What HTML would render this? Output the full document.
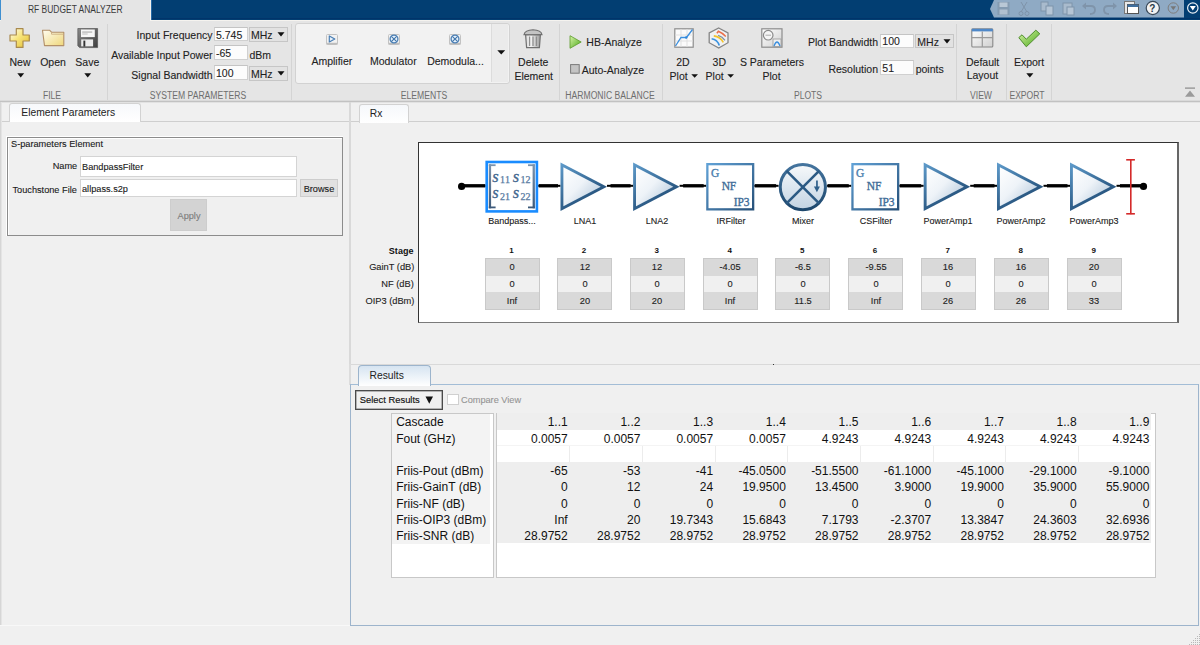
<!DOCTYPE html>
<html><head><meta charset="utf-8"><style>
html,body{margin:0;padding:0;width:1200px;height:645px;overflow:hidden;background:#f0f0f0;position:relative}
.a{position:absolute}
.t{font-family:"Liberation Sans",sans-serif;white-space:nowrap;z-index:5}
</style></head><body>
<div class="a" style="left:0px;top:0px;width:1200px;height:20px;background:#023e72"></div>
<div class="a" style="left:0px;top:18.2px;width:1200px;height:1.1999999999999993px;background:#01346a"></div>
<div class="a" style="left:0px;top:20px;width:1200px;height:1px;background:#f5f3ef"></div>
<div class="a" style="left:0px;top:0px;width:1px;height:20px;background:#3f8fd0"></div>
<div class="a" style="left:150px;top:0px;width:1px;height:20px;background:#f5f3ef"></div>
<div class="a" style="left:151px;top:0px;width:1px;height:20px;background:#3d86c6;opacity:0.6"></div>
<div class="a" style="left:1px;top:0px;width:149px;height:21px;background:#e5e5e5"></div>
<div class="a t" style="left:28px;top:4.84px;font-size:10px;line-height:10px;color:#3a3a3a;font-weight:normal;transform:scaleX(0.845);transform-origin:left top;">RF BUDGET ANALYZER</div>
<svg class="a" style="left:988px;top:0px;" width="197" height="18" viewBox="0 0 197 18"><polygon points="2,9 6,0 196,0 196,17.5 6,17.5" fill="#8faac4"/></svg>
<div class="a" style="left:0px;top:21px;width:1200px;height:80px;background:#e5e5e5"></div>
<div class="a" style="left:0px;top:102px;width:1200px;height:543px;background:#f0f0f0"></div>
<div class="a" style="left:0px;top:100px;width:1200px;height:1px;background:#dadada"></div>
<div class="a" style="left:0px;top:101px;width:1200px;height:1px;background:#c2c2c2"></div>
<div class="a" style="left:0px;top:102px;width:1200px;height:1px;background:#e2e2e2"></div>
<div class="a" style="left:107px;top:24px;width:1px;height:76px;background:#d4d4d4"></div>
<div class="a" style="left:291px;top:24px;width:1px;height:76px;background:#d4d4d4"></div>
<div class="a" style="left:559px;top:24px;width:1px;height:76px;background:#d4d4d4"></div>
<div class="a" style="left:662px;top:24px;width:1px;height:76px;background:#d4d4d4"></div>
<div class="a" style="left:956px;top:24px;width:1px;height:76px;background:#d4d4d4"></div>
<div class="a" style="left:1006px;top:24px;width:1px;height:76px;background:#d4d4d4"></div>
<div class="a" style="left:1051px;top:24px;width:1px;height:76px;background:#d4d4d4"></div>
<div class="a t" style="left:0.0px;width:40px;top:57.01px;font-size:10.5px;line-height:10.5px;color:#222;font-weight:normal;text-align:center;-webkit-text-stroke:0.1px #222;">New</div>
<div class="a t" style="left:33.0px;width:40px;top:57.01px;font-size:10.5px;line-height:10.5px;color:#222;font-weight:normal;text-align:center;-webkit-text-stroke:0.1px #222;">Open</div>
<div class="a t" style="left:67.3px;width:40px;top:57.01px;font-size:10.5px;line-height:10.5px;color:#222;font-weight:normal;text-align:center;-webkit-text-stroke:0.1px #222;">Save</div>
<div class="a t" style="left:21.5px;width:60px;top:90.53px;font-size:10px;line-height:10px;color:#6e6e6e;font-weight:normal;text-align:center;transform:scaleX(0.86);transform-origin:center top;">FILE</div>
<div class="a t" style="right:987.5px;top:30.31px;font-size:10.5px;line-height:10.5px;color:#222;font-weight:normal;text-align:right;-webkit-text-stroke:0.1px #222;">Input Frequency</div>
<div class="a t" style="right:987.5px;top:50.01px;font-size:10.5px;line-height:10.5px;color:#222;font-weight:normal;text-align:right;-webkit-text-stroke:0.1px #222;">Available Input Power</div>
<div class="a t" style="right:987.5px;top:69.51px;font-size:10.5px;line-height:10.5px;color:#222;font-weight:normal;text-align:right;-webkit-text-stroke:0.1px #222;">Signal Bandwidth</div>
<div class="a t" style="left:123.0px;width:150px;top:90.53px;font-size:10px;line-height:10px;color:#6e6e6e;font-weight:normal;text-align:center;transform:scaleX(0.86);transform-origin:center top;">SYSTEM PARAMETERS</div>
<div class="a t" style="left:301.8px;width:60px;top:56.41px;font-size:10.5px;line-height:10.5px;color:#222;font-weight:normal;text-align:center;-webkit-text-stroke:0.1px #222;">Amplifier</div>
<div class="a t" style="left:363.3px;width:60px;top:56.41px;font-size:10.5px;line-height:10.5px;color:#222;font-weight:normal;text-align:center;-webkit-text-stroke:0.1px #222;">Modulator</div>
<div class="a t" style="left:420.5px;width:70px;top:56.41px;font-size:10.5px;line-height:10.5px;color:#222;font-weight:normal;text-align:center;-webkit-text-stroke:0.1px #222;">Demodula...</div>
<div class="a t" style="left:503.29999999999995px;width:60px;top:56.61px;font-size:10.5px;line-height:10.5px;color:#222;font-weight:normal;text-align:center;-webkit-text-stroke:0.1px #222;">Delete</div>
<div class="a t" style="left:503.70000000000005px;width:60px;top:71.31px;font-size:10.5px;line-height:10.5px;color:#222;font-weight:normal;text-align:center;-webkit-text-stroke:0.1px #222;">Element</div>
<div class="a t" style="left:384.0px;width:80px;top:90.53px;font-size:10px;line-height:10px;color:#6e6e6e;font-weight:normal;text-align:center;transform:scaleX(0.86);transform-origin:center top;">ELEMENTS</div>
<div class="a t" style="left:586.3px;top:37.41px;font-size:10.5px;line-height:10.5px;color:#222;font-weight:normal;-webkit-text-stroke:0.1px #222;">HB-Analyze</div>
<div class="a t" style="left:581.7px;top:64.61px;font-size:10.5px;line-height:10.5px;color:#222;font-weight:normal;-webkit-text-stroke:0.1px #222;">Auto-Analyze</div>
<div class="a t" style="left:549.7px;width:120px;top:90.53px;font-size:10px;line-height:10px;color:#6e6e6e;font-weight:normal;text-align:center;transform:scaleX(0.86);transform-origin:center top;">HARMONIC BALANCE</div>
<div class="a t" style="left:668.0px;width:30px;top:56.61px;font-size:10.5px;line-height:10.5px;color:#222;font-weight:normal;text-align:center;-webkit-text-stroke:0.1px #222;">2D</div>
<div class="a t" style="left:663.6px;width:30px;top:70.61px;font-size:10.5px;line-height:10.5px;color:#222;font-weight:normal;text-align:center;-webkit-text-stroke:0.1px #222;">Plot</div>
<div class="a t" style="left:704.3px;width:30px;top:56.61px;font-size:10.5px;line-height:10.5px;color:#222;font-weight:normal;text-align:center;-webkit-text-stroke:0.1px #222;">3D</div>
<div class="a t" style="left:699.6px;width:30px;top:70.61px;font-size:10.5px;line-height:10.5px;color:#222;font-weight:normal;text-align:center;-webkit-text-stroke:0.1px #222;">Plot</div>
<div class="a t" style="left:732.0px;width:80px;top:56.61px;font-size:10.5px;line-height:10.5px;color:#222;font-weight:normal;text-align:center;-webkit-text-stroke:0.1px #222;">S Parameters</div>
<div class="a t" style="left:756.5px;width:30px;top:70.61px;font-size:10.5px;line-height:10.5px;color:#222;font-weight:normal;text-align:center;-webkit-text-stroke:0.1px #222;">Plot</div>
<div class="a t" style="right:322px;top:37.31px;font-size:10.5px;line-height:10.5px;color:#222;font-weight:normal;text-align:right;-webkit-text-stroke:0.1px #222;">Plot Bandwidth</div>
<div class="a t" style="right:322px;top:64.01px;font-size:10.5px;line-height:10.5px;color:#222;font-weight:normal;text-align:right;-webkit-text-stroke:0.1px #222;">Resolution</div>
<div class="a t" style="left:915.7px;top:64.01px;font-size:10.5px;line-height:10.5px;color:#222;font-weight:normal;-webkit-text-stroke:0.1px #222;">points</div>
<div class="a t" style="left:778.3px;width:60px;top:90.53px;font-size:10px;line-height:10px;color:#6e6e6e;font-weight:normal;text-align:center;transform:scaleX(0.86);transform-origin:center top;">PLOTS</div>
<div class="a t" style="left:957.6px;width:50px;top:56.61px;font-size:10.5px;line-height:10.5px;color:#222;font-weight:normal;text-align:center;-webkit-text-stroke:0.1px #222;">Default</div>
<div class="a t" style="left:957.4px;width:50px;top:70.41px;font-size:10.5px;line-height:10.5px;color:#222;font-weight:normal;text-align:center;-webkit-text-stroke:0.1px #222;">Layout</div>
<div class="a t" style="left:955.5px;width:50px;top:90.53px;font-size:10px;line-height:10px;color:#6e6e6e;font-weight:normal;text-align:center;transform:scaleX(0.86);transform-origin:center top;">VIEW</div>
<div class="a t" style="left:1004.0999999999999px;width:50px;top:56.61px;font-size:10.5px;line-height:10.5px;color:#222;font-weight:normal;text-align:center;-webkit-text-stroke:0.1px #222;">Export</div>
<div class="a t" style="left:1002.3px;width:50px;top:90.53px;font-size:10px;line-height:10px;color:#6e6e6e;font-weight:normal;text-align:center;transform:scaleX(0.86);transform-origin:center top;">EXPORT</div>
<div class="a" style="left:0px;top:102px;width:1px;height:523px;background:#d6d6d6"></div>
<div class="a" style="left:1px;top:102px;width:1px;height:523px;background:#e4e4e4"></div>
<div class="a" style="left:0px;top:625px;width:350px;height:1px;background:#f8f8f8"></div>
<div class="a" style="left:2px;top:121px;width:347px;height:1px;background:#cfcfcf"></div>
<div class="a" style="left:9px;top:103px;width:130px;height:18px;border:1px solid #d2d2d2;border-bottom:none;border-radius:3px 3px 0 0;background:linear-gradient(#f6f8fb,#ffffff)"></div>
<div class="a t" style="left:21.3px;top:108.28px;font-size:10.3px;line-height:10.3px;color:#222;font-weight:normal;">Element Parameters</div>
<div class="a" style="left:6px;top:135.5px;width:335px;height:98px;border:1px solid #ffffff;"></div>
<div class="a" style="left:7px;top:136.5px;width:334px;height:97px;border:1px solid #8c8c8c;box-shadow:inset 1px 1px 0 #fff"></div>
<div class="a t" style="left:11px;top:138.97px;font-size:9.84px;line-height:9.84px;color:#1a1a1a;font-weight:normal;transform:scaleX(0.935);transform-origin:left top;-webkit-text-stroke:0.12px #1a1a1a;">S-parameters Element</div>
<div class="a t" style="right:1123px;top:161.17px;font-size:9.84px;line-height:9.84px;color:#1a1a1a;font-weight:normal;text-align:right;transform:scaleX(0.935);transform-origin:right top;-webkit-text-stroke:0.12px #1a1a1a;">Name</div>
<div class="a" style="left:80px;top:155.5px;width:216.5px;height:21.0px;background:#fff;border:1px solid #d4d4d4;box-sizing:border-box"></div>
<div class="a t" style="left:82px;top:161.57px;font-size:9.84px;line-height:9.84px;color:#1a1a1a;font-weight:normal;transform:scaleX(0.935);transform-origin:left top;-webkit-text-stroke:0.12px #1a1a1a;">BandpassFilter</div>
<div class="a t" style="right:1123px;top:184.97px;font-size:9.84px;line-height:9.84px;color:#1a1a1a;font-weight:normal;text-align:right;transform:scaleX(0.935);transform-origin:right top;-webkit-text-stroke:0.12px #1a1a1a;">Touchstone File</div>
<div class="a" style="left:80px;top:179.3px;width:216.5px;height:18.0px;background:#fff;border:1px solid #d4d4d4;box-sizing:border-box"></div>
<div class="a t" style="left:82px;top:183.97px;font-size:9.84px;line-height:9.84px;color:#1a1a1a;font-weight:normal;transform:scaleX(0.935);transform-origin:left top;-webkit-text-stroke:0.12px #1a1a1a;">allpass.s2p</div>
<div class="a" style="left:300px;top:178.5px;width:38px;height:18.0px;background:#e1e1e1;border:1px solid #cdcdcd;box-sizing:border-box"></div>
<div class="a t" style="left:299.0px;width:40px;top:183.67px;font-size:9.84px;line-height:9.84px;color:#1a1a1a;font-weight:normal;text-align:center;transform:scaleX(0.935);transform-origin:center top;-webkit-text-stroke:0.12px #1a1a1a;">Browse</div>
<div class="a" style="left:170px;top:199.2px;width:37px;height:31.600000000000023px;background:#d3d3d3;border:1px solid #cdcdcd;box-sizing:border-box"></div>
<div class="a t" style="left:168.5px;width:40px;top:210.57px;font-size:9.84px;line-height:9.84px;color:#7c7c7c;font-weight:normal;text-align:center;transform:scaleX(0.935);transform-origin:center top;-webkit-text-stroke:0.12px #7c7c7c;">Apply</div>
<div class="a" style="left:349px;top:102px;width:2px;height:262px;background:#d9d9d9"></div>
<div class="a" style="left:351px;top:121px;width:849px;height:1px;background:#cfcfcf"></div>
<div class="a" style="left:358.5px;top:104px;width:48px;height:17.5px;border:1px solid #d2d2d2;border-bottom:none;border-radius:3px 3px 0 0;background:linear-gradient(#f6f8fb,#ffffff)"></div>
<div class="a t" style="left:369.8px;top:108.68px;font-size:10.3px;line-height:10.3px;color:#222;font-weight:normal;">Rx</div>
<div class="a" style="left:418px;top:141.5px;width:761px;height:181.5px;background:#fff;border-top:1px solid #333;border-left:1px solid #333;border-right:2px solid #666;border-bottom:1px solid #7a7a7a;box-sizing:border-box"></div>
<div class="a t" style="right:786.3px;top:247.08px;font-size:9.0px;line-height:9.0px;color:#111;font-weight:bold;text-align:right;transform:scaleX(1.0);transform-origin:right top;letter-spacing:0.1px">Stage</div>
<div class="a t" style="right:785.8px;top:261.98px;font-size:9.95px;line-height:9.95px;color:#222;font-weight:normal;text-align:right;transform:scaleX(0.935);transform-origin:right top;-webkit-text-stroke:0.12px #222;">GainT (dB)</div>
<div class="a t" style="right:785.8px;top:278.88px;font-size:9.95px;line-height:9.95px;color:#222;font-weight:normal;text-align:right;transform:scaleX(0.935);transform-origin:right top;-webkit-text-stroke:0.12px #222;">NF (dB)</div>
<div class="a t" style="right:785.8px;top:296.08px;font-size:9.95px;line-height:9.95px;color:#222;font-weight:normal;text-align:right;transform:scaleX(0.935);transform-origin:right top;-webkit-text-stroke:0.12px #222;">OIP3 (dBm)</div>
<div class="a t" style="left:496.6px;width:30px;top:246.83px;font-size:8.0px;line-height:8.0px;color:#111;font-weight:bold;text-align:center;">1</div>
<div class="a" style="left:484.80000000000007px;top:258px;width:55.0px;height:51.80000000000001px;background:#d9d9d9;border:1px solid #c9c9c9;box-sizing:border-box"></div>
<div class="a" style="left:485.80000000000007px;top:275.6px;width:53.0px;height:16.69999999999999px;background:#f0f0f0"></div>
<div class="a t" style="left:485.20000000000005px;width:54px;top:262.18px;font-size:9.95px;line-height:9.95px;color:#222;font-weight:normal;text-align:center;transform:scaleX(0.935);transform-origin:center top;-webkit-text-stroke:0.12px #222;">0</div>
<div class="a t" style="left:485.20000000000005px;width:54px;top:279.18px;font-size:9.95px;line-height:9.95px;color:#222;font-weight:normal;text-align:center;transform:scaleX(0.935);transform-origin:center top;-webkit-text-stroke:0.12px #222;">0</div>
<div class="a t" style="left:485.20000000000005px;width:54px;top:296.08px;font-size:9.95px;line-height:9.95px;color:#222;font-weight:normal;text-align:center;transform:scaleX(0.935);transform-origin:center top;-webkit-text-stroke:0.12px #222;">Inf</div>
<div class="a t" style="left:569.0px;width:30px;top:246.83px;font-size:8.0px;line-height:8.0px;color:#111;font-weight:bold;text-align:center;">2</div>
<div class="a" style="left:557.2px;top:258px;width:55.0px;height:51.80000000000001px;background:#d9d9d9;border:1px solid #c9c9c9;box-sizing:border-box"></div>
<div class="a" style="left:558.2px;top:275.6px;width:53.0px;height:16.69999999999999px;background:#f0f0f0"></div>
<div class="a t" style="left:557.6px;width:54px;top:262.18px;font-size:9.95px;line-height:9.95px;color:#222;font-weight:normal;text-align:center;transform:scaleX(0.935);transform-origin:center top;-webkit-text-stroke:0.12px #222;">12</div>
<div class="a t" style="left:557.6px;width:54px;top:279.18px;font-size:9.95px;line-height:9.95px;color:#222;font-weight:normal;text-align:center;transform:scaleX(0.935);transform-origin:center top;-webkit-text-stroke:0.12px #222;">0</div>
<div class="a t" style="left:557.6px;width:54px;top:296.08px;font-size:9.95px;line-height:9.95px;color:#222;font-weight:normal;text-align:center;transform:scaleX(0.935);transform-origin:center top;-webkit-text-stroke:0.12px #222;">20</div>
<div class="a t" style="left:641.8px;width:30px;top:246.83px;font-size:8.0px;line-height:8.0px;color:#111;font-weight:bold;text-align:center;">3</div>
<div class="a" style="left:630.0px;top:258px;width:55.0px;height:51.80000000000001px;background:#d9d9d9;border:1px solid #c9c9c9;box-sizing:border-box"></div>
<div class="a" style="left:631.0px;top:275.6px;width:53.0px;height:16.69999999999999px;background:#f0f0f0"></div>
<div class="a t" style="left:630.4px;width:54px;top:262.18px;font-size:9.95px;line-height:9.95px;color:#222;font-weight:normal;text-align:center;transform:scaleX(0.935);transform-origin:center top;-webkit-text-stroke:0.12px #222;">12</div>
<div class="a t" style="left:630.4px;width:54px;top:279.18px;font-size:9.95px;line-height:9.95px;color:#222;font-weight:normal;text-align:center;transform:scaleX(0.935);transform-origin:center top;-webkit-text-stroke:0.12px #222;">0</div>
<div class="a t" style="left:630.4px;width:54px;top:296.08px;font-size:9.95px;line-height:9.95px;color:#222;font-weight:normal;text-align:center;transform:scaleX(0.935);transform-origin:center top;-webkit-text-stroke:0.12px #222;">20</div>
<div class="a t" style="left:714.6999999999999px;width:30px;top:246.83px;font-size:8.0px;line-height:8.0px;color:#111;font-weight:bold;text-align:center;">4</div>
<div class="a" style="left:702.9px;top:258px;width:55.0px;height:51.80000000000001px;background:#d9d9d9;border:1px solid #c9c9c9;box-sizing:border-box"></div>
<div class="a" style="left:703.9px;top:275.6px;width:53.0px;height:16.69999999999999px;background:#f0f0f0"></div>
<div class="a t" style="left:703.3px;width:54px;top:262.18px;font-size:9.95px;line-height:9.95px;color:#222;font-weight:normal;text-align:center;transform:scaleX(0.935);transform-origin:center top;-webkit-text-stroke:0.12px #222;">-4.05</div>
<div class="a t" style="left:703.3px;width:54px;top:279.18px;font-size:9.95px;line-height:9.95px;color:#222;font-weight:normal;text-align:center;transform:scaleX(0.935);transform-origin:center top;-webkit-text-stroke:0.12px #222;">0</div>
<div class="a t" style="left:703.3px;width:54px;top:296.08px;font-size:9.95px;line-height:9.95px;color:#222;font-weight:normal;text-align:center;transform:scaleX(0.935);transform-origin:center top;-webkit-text-stroke:0.12px #222;">Inf</div>
<div class="a t" style="left:787.1999999999999px;width:30px;top:246.83px;font-size:8.0px;line-height:8.0px;color:#111;font-weight:bold;text-align:center;">5</div>
<div class="a" style="left:775.4px;top:258px;width:55.0px;height:51.80000000000001px;background:#d9d9d9;border:1px solid #c9c9c9;box-sizing:border-box"></div>
<div class="a" style="left:776.4px;top:275.6px;width:53.0px;height:16.69999999999999px;background:#f0f0f0"></div>
<div class="a t" style="left:775.8px;width:54px;top:262.18px;font-size:9.95px;line-height:9.95px;color:#222;font-weight:normal;text-align:center;transform:scaleX(0.935);transform-origin:center top;-webkit-text-stroke:0.12px #222;">-6.5</div>
<div class="a t" style="left:775.8px;width:54px;top:279.18px;font-size:9.95px;line-height:9.95px;color:#222;font-weight:normal;text-align:center;transform:scaleX(0.935);transform-origin:center top;-webkit-text-stroke:0.12px #222;">0</div>
<div class="a t" style="left:775.8px;width:54px;top:296.08px;font-size:9.95px;line-height:9.95px;color:#222;font-weight:normal;text-align:center;transform:scaleX(0.935);transform-origin:center top;-webkit-text-stroke:0.12px #222;">11.5</div>
<div class="a t" style="left:860.0px;width:30px;top:246.83px;font-size:8.0px;line-height:8.0px;color:#111;font-weight:bold;text-align:center;">6</div>
<div class="a" style="left:848.2px;top:258px;width:55.0px;height:51.80000000000001px;background:#d9d9d9;border:1px solid #c9c9c9;box-sizing:border-box"></div>
<div class="a" style="left:849.2px;top:275.6px;width:53.0px;height:16.69999999999999px;background:#f0f0f0"></div>
<div class="a t" style="left:848.6px;width:54px;top:262.18px;font-size:9.95px;line-height:9.95px;color:#222;font-weight:normal;text-align:center;transform:scaleX(0.935);transform-origin:center top;-webkit-text-stroke:0.12px #222;">-9.55</div>
<div class="a t" style="left:848.6px;width:54px;top:279.18px;font-size:9.95px;line-height:9.95px;color:#222;font-weight:normal;text-align:center;transform:scaleX(0.935);transform-origin:center top;-webkit-text-stroke:0.12px #222;">0</div>
<div class="a t" style="left:848.6px;width:54px;top:296.08px;font-size:9.95px;line-height:9.95px;color:#222;font-weight:normal;text-align:center;transform:scaleX(0.935);transform-origin:center top;-webkit-text-stroke:0.12px #222;">Inf</div>
<div class="a t" style="left:932.6999999999999px;width:30px;top:246.83px;font-size:8.0px;line-height:8.0px;color:#111;font-weight:bold;text-align:center;">7</div>
<div class="a" style="left:920.9px;top:258px;width:55.0px;height:51.80000000000001px;background:#d9d9d9;border:1px solid #c9c9c9;box-sizing:border-box"></div>
<div class="a" style="left:921.9px;top:275.6px;width:53.0px;height:16.69999999999999px;background:#f0f0f0"></div>
<div class="a t" style="left:921.3px;width:54px;top:262.18px;font-size:9.95px;line-height:9.95px;color:#222;font-weight:normal;text-align:center;transform:scaleX(0.935);transform-origin:center top;-webkit-text-stroke:0.12px #222;">16</div>
<div class="a t" style="left:921.3px;width:54px;top:279.18px;font-size:9.95px;line-height:9.95px;color:#222;font-weight:normal;text-align:center;transform:scaleX(0.935);transform-origin:center top;-webkit-text-stroke:0.12px #222;">0</div>
<div class="a t" style="left:921.3px;width:54px;top:296.08px;font-size:9.95px;line-height:9.95px;color:#222;font-weight:normal;text-align:center;transform:scaleX(0.935);transform-origin:center top;-webkit-text-stroke:0.12px #222;">26</div>
<div class="a t" style="left:1005.6999999999999px;width:30px;top:246.83px;font-size:8.0px;line-height:8.0px;color:#111;font-weight:bold;text-align:center;">8</div>
<div class="a" style="left:993.9px;top:258px;width:55.000000000000114px;height:51.80000000000001px;background:#d9d9d9;border:1px solid #c9c9c9;box-sizing:border-box"></div>
<div class="a" style="left:994.9px;top:275.6px;width:53.000000000000114px;height:16.69999999999999px;background:#f0f0f0"></div>
<div class="a t" style="left:994.3px;width:54px;top:262.18px;font-size:9.95px;line-height:9.95px;color:#222;font-weight:normal;text-align:center;transform:scaleX(0.935);transform-origin:center top;-webkit-text-stroke:0.12px #222;">16</div>
<div class="a t" style="left:994.3px;width:54px;top:279.18px;font-size:9.95px;line-height:9.95px;color:#222;font-weight:normal;text-align:center;transform:scaleX(0.935);transform-origin:center top;-webkit-text-stroke:0.12px #222;">0</div>
<div class="a t" style="left:994.3px;width:54px;top:296.08px;font-size:9.95px;line-height:9.95px;color:#222;font-weight:normal;text-align:center;transform:scaleX(0.935);transform-origin:center top;-webkit-text-stroke:0.12px #222;">26</div>
<div class="a t" style="left:1078.8000000000002px;width:30px;top:246.83px;font-size:8.0px;line-height:8.0px;color:#111;font-weight:bold;text-align:center;">9</div>
<div class="a" style="left:1067.0px;top:258px;width:55.0px;height:51.80000000000001px;background:#d9d9d9;border:1px solid #c9c9c9;box-sizing:border-box"></div>
<div class="a" style="left:1068.0px;top:275.6px;width:53.0px;height:16.69999999999999px;background:#f0f0f0"></div>
<div class="a t" style="left:1067.4px;width:54px;top:262.18px;font-size:9.95px;line-height:9.95px;color:#222;font-weight:normal;text-align:center;transform:scaleX(0.935);transform-origin:center top;-webkit-text-stroke:0.12px #222;">20</div>
<div class="a t" style="left:1067.4px;width:54px;top:279.18px;font-size:9.95px;line-height:9.95px;color:#222;font-weight:normal;text-align:center;transform:scaleX(0.935);transform-origin:center top;-webkit-text-stroke:0.12px #222;">0</div>
<div class="a t" style="left:1067.4px;width:54px;top:296.08px;font-size:9.95px;line-height:9.95px;color:#222;font-weight:normal;text-align:center;transform:scaleX(0.935);transform-origin:center top;-webkit-text-stroke:0.12px #222;">33</div>
<div class="a" style="left:349px;top:364px;width:851px;height:1px;background:#d9d9d9"></div>
<div class="a" style="left:349px;top:364px;width:2px;height:21px;background:#dcdcdc"></div>
<div class="a" style="left:350px;top:384px;width:847px;height:240px;border:1px solid #9db4cc;border-top-color:#a3bdd6"></div>
<div class="a" style="left:358px;top:365px;width:71px;height:19.5px;border:1px solid #9cb4cc;border-bottom:none;border-radius:4px 4px 0 0;background:linear-gradient(#d6e4f1,#ffffff)"></div>
<div class="a t" style="left:369.5px;top:371.18px;font-size:10.3px;line-height:10.3px;color:#222;font-weight:normal;">Results</div>
<div class="a" style="left:355px;top:389.8px;width:85.5px;height:17.8px;border:1px solid #4a4a4a;box-shadow:inset 0 0 0 0.5px #777;background:#f0f0f0"></div>
<div class="a t" style="left:359.8px;top:394.64px;font-size:9.4px;line-height:9.4px;color:#111;font-weight:normal;-webkit-text-stroke:0.15px #111">Select Results</div>
<svg class="a" style="left:424.5px;top:396.2px;" width="9" height="9" viewBox="0 0 9 9"><polygon points="0.5,0.5 8,0.5 4.25,7.8" fill="#111"/></svg>
<div class="a" style="left:447px;top:394px;width:11.600000000000023px;height:11.199999999999989px;background:#fff;border:1px solid #d0d0d0;box-sizing:border-box"></div>
<div class="a t" style="left:460.8px;top:395.17px;font-size:9.84px;line-height:9.84px;color:#959595;font-weight:normal;transform:scaleX(0.935);transform-origin:left top;-webkit-text-stroke:0.12px #959595;">Compare View</div>
<div class="a" style="left:391px;top:412.5px;width:103px;height:165.0px;background:#fff;border:1px solid #c8c8c8;box-sizing:border-box"></div>
<div class="a" style="left:392px;top:413.5px;width:98px;height:130.10000000000002px;background:#f3f3f3"></div>
<div class="a" style="left:496px;top:412.5px;width:660px;height:165.0px;background:#fff;border:1px solid #c8c8c8;box-sizing:border-box"></div>
<div class="a" style="left:497px;top:413.4px;width:654px;height:16.25px;background:#eeeeee"></div>
<div class="a" style="left:497px;top:462.15px;width:654px;height:81.25px;background:#eeeeee"></div>
<div class="a" style="left:569.2px;top:445.9px;width:1.0px;height:16.25px;background:#ececec"></div>
<div class="a" style="left:641.9px;top:445.9px;width:1.0px;height:16.25px;background:#ececec"></div>
<div class="a" style="left:714.6px;top:445.9px;width:1.0px;height:16.25px;background:#ececec"></div>
<div class="a" style="left:787.3px;top:445.9px;width:1.0px;height:16.25px;background:#ececec"></div>
<div class="a" style="left:860.0px;top:445.9px;width:1.0px;height:16.25px;background:#ececec"></div>
<div class="a" style="left:932.7px;top:445.9px;width:1.0px;height:16.25px;background:#ececec"></div>
<div class="a" style="left:1005.4000000000001px;top:445.9px;width:1.0px;height:16.25px;background:#ececec"></div>
<div class="a" style="left:1078.1px;top:445.9px;width:1.0px;height:16.25px;background:#ececec"></div>
<div class="a" style="left:497px;top:445.4px;width:654px;height:1.0px;background:#f4f4f4"></div>
<div class="a" style="left:773px;top:364px;width:1px;height:1px;background:#333"></div>
<div class="a t" style="left:396.2px;top:416.44px;font-size:12px;line-height:12px;color:#111;font-weight:normal;">Cascade</div>
<div class="a t" style="right:632.3px;top:416.44px;font-size:12px;line-height:12px;color:#111;font-weight:normal;text-align:right;">1..1</div>
<div class="a t" style="right:559.6px;top:416.44px;font-size:12px;line-height:12px;color:#111;font-weight:normal;text-align:right;">1..2</div>
<div class="a t" style="right:486.9px;top:416.44px;font-size:12px;line-height:12px;color:#111;font-weight:normal;text-align:right;">1..3</div>
<div class="a t" style="right:414.20000000000005px;top:416.44px;font-size:12px;line-height:12px;color:#111;font-weight:normal;text-align:right;">1..4</div>
<div class="a t" style="right:341.5px;top:416.44px;font-size:12px;line-height:12px;color:#111;font-weight:normal;text-align:right;">1..5</div>
<div class="a t" style="right:268.79999999999995px;top:416.44px;font-size:12px;line-height:12px;color:#111;font-weight:normal;text-align:right;">1..6</div>
<div class="a t" style="right:196.0999999999999px;top:416.44px;font-size:12px;line-height:12px;color:#111;font-weight:normal;text-align:right;">1..7</div>
<div class="a t" style="right:123.40000000000009px;top:416.44px;font-size:12px;line-height:12px;color:#111;font-weight:normal;text-align:right;">1..8</div>
<div class="a t" style="right:50.69999999999982px;top:416.44px;font-size:12px;line-height:12px;color:#111;font-weight:normal;text-align:right;">1..9</div>
<div class="a t" style="left:396.2px;top:432.69px;font-size:12px;line-height:12px;color:#111;font-weight:normal;">Fout (GHz)</div>
<div class="a t" style="right:632.3px;top:432.69px;font-size:12px;line-height:12px;color:#111;font-weight:normal;text-align:right;">0.0057</div>
<div class="a t" style="right:559.6px;top:432.69px;font-size:12px;line-height:12px;color:#111;font-weight:normal;text-align:right;">0.0057</div>
<div class="a t" style="right:486.9px;top:432.69px;font-size:12px;line-height:12px;color:#111;font-weight:normal;text-align:right;">0.0057</div>
<div class="a t" style="right:414.20000000000005px;top:432.69px;font-size:12px;line-height:12px;color:#111;font-weight:normal;text-align:right;">0.0057</div>
<div class="a t" style="right:341.5px;top:432.69px;font-size:12px;line-height:12px;color:#111;font-weight:normal;text-align:right;">4.9243</div>
<div class="a t" style="right:268.79999999999995px;top:432.69px;font-size:12px;line-height:12px;color:#111;font-weight:normal;text-align:right;">4.9243</div>
<div class="a t" style="right:196.0999999999999px;top:432.69px;font-size:12px;line-height:12px;color:#111;font-weight:normal;text-align:right;">4.9243</div>
<div class="a t" style="right:123.40000000000009px;top:432.69px;font-size:12px;line-height:12px;color:#111;font-weight:normal;text-align:right;">4.9243</div>
<div class="a t" style="right:50.69999999999982px;top:432.69px;font-size:12px;line-height:12px;color:#111;font-weight:normal;text-align:right;">4.9243</div>
<div class="a t" style="left:396.2px;top:465.19px;font-size:12px;line-height:12px;color:#111;font-weight:normal;">Friis-Pout (dBm)</div>
<div class="a t" style="right:632.3px;top:465.19px;font-size:12px;line-height:12px;color:#111;font-weight:normal;text-align:right;">-65</div>
<div class="a t" style="right:559.6px;top:465.19px;font-size:12px;line-height:12px;color:#111;font-weight:normal;text-align:right;">-53</div>
<div class="a t" style="right:486.9px;top:465.19px;font-size:12px;line-height:12px;color:#111;font-weight:normal;text-align:right;">-41</div>
<div class="a t" style="right:414.20000000000005px;top:465.19px;font-size:12px;line-height:12px;color:#111;font-weight:normal;text-align:right;">-45.0500</div>
<div class="a t" style="right:341.5px;top:465.19px;font-size:12px;line-height:12px;color:#111;font-weight:normal;text-align:right;">-51.5500</div>
<div class="a t" style="right:268.79999999999995px;top:465.19px;font-size:12px;line-height:12px;color:#111;font-weight:normal;text-align:right;">-61.1000</div>
<div class="a t" style="right:196.0999999999999px;top:465.19px;font-size:12px;line-height:12px;color:#111;font-weight:normal;text-align:right;">-45.1000</div>
<div class="a t" style="right:123.40000000000009px;top:465.19px;font-size:12px;line-height:12px;color:#111;font-weight:normal;text-align:right;">-29.1000</div>
<div class="a t" style="right:50.69999999999982px;top:465.19px;font-size:12px;line-height:12px;color:#111;font-weight:normal;text-align:right;">-9.1000</div>
<div class="a t" style="left:396.2px;top:481.44px;font-size:12px;line-height:12px;color:#111;font-weight:normal;">Friis-GainT (dB)</div>
<div class="a t" style="right:632.3px;top:481.44px;font-size:12px;line-height:12px;color:#111;font-weight:normal;text-align:right;">0</div>
<div class="a t" style="right:559.6px;top:481.44px;font-size:12px;line-height:12px;color:#111;font-weight:normal;text-align:right;">12</div>
<div class="a t" style="right:486.9px;top:481.44px;font-size:12px;line-height:12px;color:#111;font-weight:normal;text-align:right;">24</div>
<div class="a t" style="right:414.20000000000005px;top:481.44px;font-size:12px;line-height:12px;color:#111;font-weight:normal;text-align:right;">19.9500</div>
<div class="a t" style="right:341.5px;top:481.44px;font-size:12px;line-height:12px;color:#111;font-weight:normal;text-align:right;">13.4500</div>
<div class="a t" style="right:268.79999999999995px;top:481.44px;font-size:12px;line-height:12px;color:#111;font-weight:normal;text-align:right;">3.9000</div>
<div class="a t" style="right:196.0999999999999px;top:481.44px;font-size:12px;line-height:12px;color:#111;font-weight:normal;text-align:right;">19.9000</div>
<div class="a t" style="right:123.40000000000009px;top:481.44px;font-size:12px;line-height:12px;color:#111;font-weight:normal;text-align:right;">35.9000</div>
<div class="a t" style="right:50.69999999999982px;top:481.44px;font-size:12px;line-height:12px;color:#111;font-weight:normal;text-align:right;">55.9000</div>
<div class="a t" style="left:396.2px;top:497.69px;font-size:12px;line-height:12px;color:#111;font-weight:normal;">Friis-NF (dB)</div>
<div class="a t" style="right:632.3px;top:497.69px;font-size:12px;line-height:12px;color:#111;font-weight:normal;text-align:right;">0</div>
<div class="a t" style="right:559.6px;top:497.69px;font-size:12px;line-height:12px;color:#111;font-weight:normal;text-align:right;">0</div>
<div class="a t" style="right:486.9px;top:497.69px;font-size:12px;line-height:12px;color:#111;font-weight:normal;text-align:right;">0</div>
<div class="a t" style="right:414.20000000000005px;top:497.69px;font-size:12px;line-height:12px;color:#111;font-weight:normal;text-align:right;">0</div>
<div class="a t" style="right:341.5px;top:497.69px;font-size:12px;line-height:12px;color:#111;font-weight:normal;text-align:right;">0</div>
<div class="a t" style="right:268.79999999999995px;top:497.69px;font-size:12px;line-height:12px;color:#111;font-weight:normal;text-align:right;">0</div>
<div class="a t" style="right:196.0999999999999px;top:497.69px;font-size:12px;line-height:12px;color:#111;font-weight:normal;text-align:right;">0</div>
<div class="a t" style="right:123.40000000000009px;top:497.69px;font-size:12px;line-height:12px;color:#111;font-weight:normal;text-align:right;">0</div>
<div class="a t" style="right:50.69999999999982px;top:497.69px;font-size:12px;line-height:12px;color:#111;font-weight:normal;text-align:right;">0</div>
<div class="a t" style="left:396.2px;top:513.94px;font-size:12px;line-height:12px;color:#111;font-weight:normal;">Friis-OIP3 (dBm)</div>
<div class="a t" style="right:632.3px;top:513.94px;font-size:12px;line-height:12px;color:#111;font-weight:normal;text-align:right;">Inf</div>
<div class="a t" style="right:559.6px;top:513.94px;font-size:12px;line-height:12px;color:#111;font-weight:normal;text-align:right;">20</div>
<div class="a t" style="right:486.9px;top:513.94px;font-size:12px;line-height:12px;color:#111;font-weight:normal;text-align:right;">19.7343</div>
<div class="a t" style="right:414.20000000000005px;top:513.94px;font-size:12px;line-height:12px;color:#111;font-weight:normal;text-align:right;">15.6843</div>
<div class="a t" style="right:341.5px;top:513.94px;font-size:12px;line-height:12px;color:#111;font-weight:normal;text-align:right;">7.1793</div>
<div class="a t" style="right:268.79999999999995px;top:513.94px;font-size:12px;line-height:12px;color:#111;font-weight:normal;text-align:right;">-2.3707</div>
<div class="a t" style="right:196.0999999999999px;top:513.94px;font-size:12px;line-height:12px;color:#111;font-weight:normal;text-align:right;">13.3847</div>
<div class="a t" style="right:123.40000000000009px;top:513.94px;font-size:12px;line-height:12px;color:#111;font-weight:normal;text-align:right;">24.3603</div>
<div class="a t" style="right:50.69999999999982px;top:513.94px;font-size:12px;line-height:12px;color:#111;font-weight:normal;text-align:right;">32.6936</div>
<div class="a t" style="left:396.2px;top:530.19px;font-size:12px;line-height:12px;color:#111;font-weight:normal;">Friis-SNR (dB)</div>
<div class="a t" style="right:632.3px;top:530.19px;font-size:12px;line-height:12px;color:#111;font-weight:normal;text-align:right;">28.9752</div>
<div class="a t" style="right:559.6px;top:530.19px;font-size:12px;line-height:12px;color:#111;font-weight:normal;text-align:right;">28.9752</div>
<div class="a t" style="right:486.9px;top:530.19px;font-size:12px;line-height:12px;color:#111;font-weight:normal;text-align:right;">28.9752</div>
<div class="a t" style="right:414.20000000000005px;top:530.19px;font-size:12px;line-height:12px;color:#111;font-weight:normal;text-align:right;">28.9752</div>
<div class="a t" style="right:341.5px;top:530.19px;font-size:12px;line-height:12px;color:#111;font-weight:normal;text-align:right;">28.9752</div>
<div class="a t" style="right:268.79999999999995px;top:530.19px;font-size:12px;line-height:12px;color:#111;font-weight:normal;text-align:right;">28.9752</div>
<div class="a t" style="right:196.0999999999999px;top:530.19px;font-size:12px;line-height:12px;color:#111;font-weight:normal;text-align:right;">28.9752</div>
<div class="a t" style="right:123.40000000000009px;top:530.19px;font-size:12px;line-height:12px;color:#111;font-weight:normal;text-align:right;">28.9752</div>
<div class="a t" style="right:50.69999999999982px;top:530.19px;font-size:12px;line-height:12px;color:#111;font-weight:normal;text-align:right;">28.9752</div>
<svg class="a" style="left:0;top:0" width="1200" height="645" viewBox="0 0 1200 645"><defs>
<linearGradient id="tb" x1="0" y1="0" x2="0.6" y2="1"><stop offset="0" stop-color="#5f9ccc"/><stop offset="1" stop-color="#1c466f"/></linearGradient>
<linearGradient id="tf" x1="0" y1="0" x2="1" y2="1"><stop offset="0" stop-color="#ffffff"/><stop offset="0.45" stop-color="#eef3f8"/><stop offset="1" stop-color="#a9c0d6"/></linearGradient>
<linearGradient id="fb" x1="0" y1="0" x2="1" y2="1"><stop offset="0" stop-color="#62a3d8"/><stop offset="1" stop-color="#264f77"/></linearGradient>
<linearGradient id="mf" x1="0" y1="0" x2="0" y2="1"><stop offset="0" stop-color="#f7f9fb"/><stop offset="1" stop-color="#c2d3e3"/></linearGradient>
<linearGradient id="mb" x1="0" y1="0" x2="0" y2="1"><stop offset="0" stop-color="#44749e"/><stop offset="1" stop-color="#1d476d"/></linearGradient>
<linearGradient id="br" x1="0" y1="0" x2="0" y2="1"><stop offset="0" stop-color="#7b93ad"/><stop offset="1" stop-color="#3d5a7a"/></linearGradient>
</defs><circle cx="461.6" cy="186.4" r="3.6" fill="#000"/><rect x="462" y="184.8" width="23.399999999999977" height="2" fill="#000"/><rect x="462" y="184.15" width="23.399999999999977" height="3.3" fill="#000"/><rect x="538.2" y="184.8" width="22.299999999999955" height="2" fill="#000"/><rect x="538.7" y="184.15" width="19.299999999999955" height="3.3" fill="#000"/><rect x="607" y="184.8" width="26.100000000000023" height="2" fill="#000"/><rect x="610.5" y="184.15" width="20.100000000000023" height="3.3" fill="#000"/><rect x="679.6" y="184.8" width="26.600000000000023" height="2" fill="#000"/><rect x="683.1" y="184.15" width="20.600000000000023" height="3.3" fill="#000"/><rect x="754.3" y="184.8" width="24.300000000000068" height="2" fill="#000"/><rect x="754.8" y="184.15" width="21.300000000000068" height="3.3" fill="#000"/><rect x="827.1" y="184.8" width="24.199999999999932" height="2" fill="#000"/><rect x="827.6" y="184.15" width="21.199999999999932" height="3.3" fill="#000"/><rect x="899.3" y="184.8" width="24.40000000000009" height="2" fill="#000"/><rect x="899.8" y="184.15" width="21.40000000000009" height="3.3" fill="#000"/><rect x="970.2" y="184.8" width="26.799999999999955" height="2" fill="#000"/><rect x="973.7" y="184.15" width="20.799999999999955" height="3.3" fill="#000"/><rect x="1043.5" y="184.8" width="26.5" height="2" fill="#000"/><rect x="1047.0" y="184.15" width="20.5" height="3.3" fill="#000"/><rect x="1116.5" y="184.8" width="27.0" height="2" fill="#000"/><rect x="1120.0" y="184.15" width="23.5" height="3.3" fill="#000"/><circle cx="1143.5" cy="186.4" r="3.6" fill="#000"/><rect x="1130" y="159.5" width="1.6" height="54.7" fill="#d42a2a"/><rect x="1126.2" y="159" width="8.7" height="1.6" fill="#d42a2a"/><rect x="1126.2" y="213" width="8.7" height="1.6" fill="#d42a2a"/><rect x="485.4" y="160.7" width="52.80000000000007" height="52" fill="#1a8cff"/><rect x="488.0" y="163.3" width="47.600000000000065" height="46.8" fill="#fff"/><rect x="488.8" y="164.3" width="2.3" height="44" fill="url(#br)"/><rect x="488.8" y="164.3" width="6.8" height="1.8" fill="#7b93ad"/><rect x="488.8" y="206.5" width="6.8" height="1.8" fill="#3d5a7a"/><rect x="532.6" y="164.3" width="2.3" height="44" fill="url(#br)"/><rect x="528" y="164.3" width="6.9" height="1.8" fill="#7b93ad"/><rect x="528" y="206.5" width="6.9" height="1.8" fill="#3d5a7a"/><text x="492.3" y="181.5" font-family="Liberation Serif" font-style="italic" font-size="16.5" fill="#44688f" stroke="#44688f" stroke-width="0.3">s</text><text x="499.90000000000003" y="183.4" font-family="Liberation Serif" font-size="10" fill="#55799f" stroke="#55799f" stroke-width="0.25" textLength="10.2">11</text><text x="512.8" y="181.5" font-family="Liberation Serif" font-style="italic" font-size="16.5" fill="#44688f" stroke="#44688f" stroke-width="0.3">s</text><text x="520.4" y="183.4" font-family="Liberation Serif" font-size="10" fill="#55799f" stroke="#55799f" stroke-width="0.25" textLength="10.2">12</text><text x="492.3" y="198.1" font-family="Liberation Serif" font-style="italic" font-size="16.5" fill="#44688f" stroke="#44688f" stroke-width="0.3">s</text><text x="499.90000000000003" y="200.0" font-family="Liberation Serif" font-size="10" fill="#55799f" stroke="#55799f" stroke-width="0.25" textLength="10.2">21</text><text x="512.8" y="198.1" font-family="Liberation Serif" font-style="italic" font-size="16.5" fill="#44688f" stroke="#44688f" stroke-width="0.3">s</text><text x="520.4" y="200.0" font-family="Liberation Serif" font-size="10" fill="#55799f" stroke="#55799f" stroke-width="0.25" textLength="10.2">22</text><polygon points="560.5,162.5 560.5,211 607.0,186.75" fill="url(#tb)"/><polygon points="563.4,167.27751358695653 563.4,206.22248641304347 600.7389945652175,186.75" fill="url(#tf)"/><polygon points="633.1,162.5 633.1,211 679.6,186.75" fill="url(#tb)"/><polygon points="636.0,167.27751358695653 636.0,206.22248641304347 673.3389945652175,186.75" fill="url(#tf)"/><rect x="706.2" y="163" width="48.09999999999991" height="47.5" fill="url(#fb)"/><rect x="708.5" y="165.3" width="43.49999999999991" height="42.9" fill="#fff"/><text x="711.0" y="176.7" font-family="Liberation Serif" font-size="11.5" fill="#4a7eae" stroke="#4a7eae" stroke-width="0.35">G</text><text x="721.7" y="189.7" font-family="Liberation Serif" font-size="11.5" fill="#3f6d98" stroke="#3f6d98" stroke-width="0.35" textLength="14.5">NF</text><text x="733.7" y="205.8" font-family="Liberation Serif" font-size="11.5" fill="#3f6d98" stroke="#3f6d98" stroke-width="0.35" textLength="15.8">IP3</text><circle cx="802.85" cy="187.1" r="22.6" fill="url(#mf)" stroke="url(#mb)" stroke-width="3"/><line x1="786.5867000000001" y1="170.8367" x2="819.1133" y2="203.36329999999998" stroke="#2c5a84" stroke-width="2.6"/><line x1="786.5867000000001" y1="203.36329999999998" x2="819.1133" y2="170.8367" stroke="#2c5a84" stroke-width="2.6"/><rect x="816.1" y="180.5" width="1.7" height="7" fill="#2f5f8a"/><polygon points="813.9,186.6 819.9,186.6 816.9,192.2" fill="#2f5f8a"/><rect x="851.3" y="163" width="48.0" height="47.5" fill="url(#fb)"/><rect x="853.5999999999999" y="165.3" width="43.4" height="42.9" fill="#fff"/><text x="856.0999999999999" y="176.7" font-family="Liberation Serif" font-size="11.5" fill="#4a7eae" stroke="#4a7eae" stroke-width="0.35">G</text><text x="866.8" y="189.7" font-family="Liberation Serif" font-size="11.5" fill="#3f6d98" stroke="#3f6d98" stroke-width="0.35" textLength="14.5">NF</text><text x="878.8" y="205.8" font-family="Liberation Serif" font-size="11.5" fill="#3f6d98" stroke="#3f6d98" stroke-width="0.35" textLength="15.8">IP3</text><polygon points="923.7,162.5 923.7,211 970.2,186.75" fill="url(#tb)"/><polygon points="926.6,167.27751358695653 926.6,206.22248641304347 963.9389945652175,186.75" fill="url(#tf)"/><polygon points="997,162.5 997,211 1043.5,186.75" fill="url(#tb)"/><polygon points="999.9,167.27751358695653 999.9,206.22248641304347 1037.2389945652174,186.75" fill="url(#tf)"/><polygon points="1070,162.5 1070,211 1116.5,186.75" fill="url(#tb)"/><polygon points="1072.9,167.27751358695653 1072.9,206.22248641304347 1110.2389945652174,186.75" fill="url(#tf)"/></svg>
<div class="a t" style="left:476.8px;width:70px;top:216.25px;font-size:9.63px;line-height:9.63px;color:#1a1a1a;font-weight:normal;text-align:center;transform:scaleX(0.935);transform-origin:center top;-webkit-text-stroke:0.12px #1a1a1a;">Bandpass...</div>
<div class="a t" style="left:550.0px;width:70px;top:216.25px;font-size:9.63px;line-height:9.63px;color:#1a1a1a;font-weight:normal;text-align:center;transform:scaleX(0.935);transform-origin:center top;-webkit-text-stroke:0.12px #1a1a1a;">LNA1</div>
<div class="a t" style="left:622.4px;width:70px;top:216.25px;font-size:9.63px;line-height:9.63px;color:#1a1a1a;font-weight:normal;text-align:center;transform:scaleX(0.935);transform-origin:center top;-webkit-text-stroke:0.12px #1a1a1a;">LNA2</div>
<div class="a t" style="left:695.7px;width:70px;top:216.25px;font-size:9.63px;line-height:9.63px;color:#1a1a1a;font-weight:normal;text-align:center;transform:scaleX(0.935);transform-origin:center top;-webkit-text-stroke:0.12px #1a1a1a;">IRFilter</div>
<div class="a t" style="left:767.9px;width:70px;top:216.25px;font-size:9.63px;line-height:9.63px;color:#1a1a1a;font-weight:normal;text-align:center;transform:scaleX(0.935);transform-origin:center top;-webkit-text-stroke:0.12px #1a1a1a;">Mixer</div>
<div class="a t" style="left:840.7px;width:70px;top:216.25px;font-size:9.63px;line-height:9.63px;color:#1a1a1a;font-weight:normal;text-align:center;transform:scaleX(0.935);transform-origin:center top;-webkit-text-stroke:0.12px #1a1a1a;">CSFilter</div>
<div class="a t" style="left:913.2px;width:70px;top:216.25px;font-size:9.63px;line-height:9.63px;color:#1a1a1a;font-weight:normal;text-align:center;transform:scaleX(0.935);transform-origin:center top;-webkit-text-stroke:0.12px #1a1a1a;">PowerAmp1</div>
<div class="a t" style="left:986.0px;width:70px;top:216.25px;font-size:9.63px;line-height:9.63px;color:#1a1a1a;font-weight:normal;text-align:center;transform:scaleX(0.935);transform-origin:center top;-webkit-text-stroke:0.12px #1a1a1a;">PowerAmp2</div>
<div class="a t" style="left:1059.4px;width:70px;top:216.25px;font-size:9.63px;line-height:9.63px;color:#1a1a1a;font-weight:normal;text-align:center;transform:scaleX(0.935);transform-origin:center top;-webkit-text-stroke:0.12px #1a1a1a;">PowerAmp3</div>
<div class="a" style="left:214px;top:26.7px;width:33.5px;height:14.599999999999998px;background:#fcfcfc;border:1px solid #d0d0d0;box-sizing:border-box;border-top-color:#c4c4c4"></div>
<div class="a t" style="left:216px;top:29.71px;font-size:10.5px;line-height:10.5px;color:#1e1e1e;font-weight:normal;-webkit-text-stroke:0.1px #1e1e1e;">5.745</div>
<div class="a" style="left:249px;top:27px;width:38.5px;height:14.600000000000001px;background:#e2e2e2;border:1px solid #c6c6c6;box-sizing:border-box"></div>
<div class="a t" style="left:251px;top:29.71px;font-size:10.5px;line-height:10.5px;color:#1e1e1e;font-weight:normal;-webkit-text-stroke:0.1px #1e1e1e;">MHz</div>
<svg class="a" style="left:276.5px;top:32.099999999999994px;" width="8" height="5" viewBox="0 0 8 5"><polygon points="0.5,0.3 7.5,0.3 4,4.6" fill="#111"/></svg>
<div class="a" style="left:214px;top:45px;width:33.5px;height:15px;background:#fcfcfc;border:1px solid #d0d0d0;box-sizing:border-box;border-top-color:#c4c4c4"></div>
<div class="a t" style="left:216px;top:48.41px;font-size:10.5px;line-height:10.5px;color:#1e1e1e;font-weight:normal;-webkit-text-stroke:0.1px #1e1e1e;">-65</div>
<div class="a t" style="left:249.5px;top:50.01px;font-size:10.5px;line-height:10.5px;color:#1e1e1e;font-weight:normal;-webkit-text-stroke:0.1px #1e1e1e;">dBm</div>
<div class="a" style="left:214px;top:65px;width:33.5px;height:15px;background:#fcfcfc;border:1px solid #d0d0d0;box-sizing:border-box;border-top-color:#c4c4c4"></div>
<div class="a t" style="left:216px;top:68.41px;font-size:10.5px;line-height:10.5px;color:#1e1e1e;font-weight:normal;-webkit-text-stroke:0.1px #1e1e1e;">100</div>
<div class="a" style="left:249px;top:66px;width:38.5px;height:15px;background:#e2e2e2;border:1px solid #c6c6c6;box-sizing:border-box"></div>
<div class="a t" style="left:251px;top:69.11px;font-size:10.5px;line-height:10.5px;color:#1e1e1e;font-weight:normal;-webkit-text-stroke:0.1px #1e1e1e;">MHz</div>
<svg class="a" style="left:276.5px;top:71.3px;" width="8" height="5" viewBox="0 0 8 5"><polygon points="0.5,0.3 7.5,0.3 4,4.6" fill="#111"/></svg>
<div class="a" style="left:880.3px;top:33.7px;width:33.30000000000007px;height:13.899999999999999px;background:#fcfcfc;border:1px solid #d0d0d0;box-sizing:border-box;border-top-color:#c4c4c4"></div>
<div class="a t" style="left:882.3px;top:36.01px;font-size:10.5px;line-height:10.5px;color:#1e1e1e;font-weight:normal;-webkit-text-stroke:0.1px #1e1e1e;">100</div>
<div class="a" style="left:915.3px;top:34.3px;width:38.30000000000007px;height:14.100000000000001px;background:#e2e2e2;border:1px solid #c6c6c6;box-sizing:border-box"></div>
<div class="a t" style="left:917.3px;top:36.51px;font-size:10.5px;line-height:10.5px;color:#1e1e1e;font-weight:normal;-webkit-text-stroke:0.1px #1e1e1e;">MHz</div>
<svg class="a" style="left:942.6px;top:39.14999999999999px;" width="8" height="5" viewBox="0 0 8 5"><polygon points="0.5,0.3 7.5,0.3 4,4.6" fill="#111"/></svg>
<div class="a" style="left:880.3px;top:59.6px;width:33.30000000000007px;height:15.100000000000001px;background:#fcfcfc;border:1px solid #d0d0d0;box-sizing:border-box;border-top-color:#c4c4c4"></div>
<div class="a t" style="left:882.3px;top:63.11px;font-size:10.5px;line-height:10.5px;color:#1e1e1e;font-weight:normal;-webkit-text-stroke:0.1px #1e1e1e;">51</div>
<div class="a" style="left:295.3px;top:22.7px;width:212.7px;height:59.6px;border:1px solid #d2d2d2;border-radius:3px;background:#f2f2f2"></div>
<div class="a" style="left:491px;top:23.7px;width:1px;height:58.599999999999994px;background:#dcdcdc"></div>
<div class="a" style="left:492px;top:23.7px;width:16px;height:58.599999999999994px;background:#ebebeb"></div>
<svg class="a" style="left:496.5px;top:50.3px;" width="9" height="5" viewBox="0 0 9 5"><polygon points="0.3,0.2 8.2,0.2 4.25,4.4" fill="#111"/></svg>
<svg class="a" style="left:326px;top:34px;" width="12" height="11" viewBox="0 0 12 11"><rect x="0.5" y="0.5" width="11" height="10" rx="1" fill="#f2f2f2" stroke="#c2c2c2"/><rect x="0.5" y="8.8" width="11" height="1.7" fill="#bdbdbd"/><polygon points="3.3,2 3.3,8 8.8,5" fill="#e6f1fb" stroke="#4a7fb5" stroke-width="1.2" stroke-linejoin="round"/></svg>
<svg class="a" style="left:387.5px;top:34px;" width="12" height="11" viewBox="0 0 12 11"><rect x="0.5" y="0.5" width="11" height="10" rx="1" fill="#f2f2f2" stroke="#c2c2c2"/><rect x="0.5" y="8.8" width="11" height="1.7" fill="#bdbdbd"/><circle cx="6" cy="5" r="3.9" fill="#e6f1fb" stroke="#4a7fb5" stroke-width="1.3"/><path d="M3.3,2.3 L8.7,7.7 M3.3,7.7 L8.7,2.3" stroke="#3f74aa" stroke-width="1.1"/></svg>
<svg class="a" style="left:449px;top:34px;" width="12" height="11" viewBox="0 0 12 11"><rect x="0.5" y="0.5" width="11" height="10" rx="1" fill="#f2f2f2" stroke="#c2c2c2"/><rect x="0.5" y="8.8" width="11" height="1.7" fill="#bdbdbd"/><circle cx="6" cy="5" r="3.9" fill="#e6f1fb" stroke="#4a7fb5" stroke-width="1.3"/><path d="M3.3,2.3 L8.7,7.7 M3.3,7.7 L8.7,2.3" stroke="#3f74aa" stroke-width="1.1"/></svg>
<svg class="a" style="left:16.6px;top:73.2px;" width="8" height="5.4" viewBox="0 0 8 5.4"><polygon points="0.3,0.3 7.2,0.3 3.75,4.4" fill="#111"/></svg>
<svg class="a" style="left:84.2px;top:73.2px;" width="8" height="5.4" viewBox="0 0 8 5.4"><polygon points="0.3,0.3 7.2,0.3 3.75,4.4" fill="#111"/></svg>
<svg class="a" style="left:691px;top:73.7px;" width="7.8" height="4.8" viewBox="0 0 7.8 4.8"><polygon points="0.3,0.3 7.0,0.3 3.65,3.8" fill="#111"/></svg>
<svg class="a" style="left:726.8px;top:73.7px;" width="7.8" height="4.8" viewBox="0 0 7.8 4.8"><polygon points="0.3,0.3 7.0,0.3 3.65,3.8" fill="#111"/></svg>
<svg class="a" style="left:1026px;top:73.2px;" width="8.2" height="5.4" viewBox="0 0 8.2 5.4"><polygon points="0.3,0.3 7.4,0.3 3.85,4.4" fill="#111"/></svg>
<svg class="a" style="left:0px;top:0px;width:1px;height:1px" width="1" height="1" viewBox="0 0 1 1"><defs><linearGradient id="yel" x1="0" y1="0" x2="1" y2="1"><stop offset="0" stop-color="#ffffff"/><stop offset="0.45" stop-color="#f8e57c"/><stop offset="1" stop-color="#e2bd30"/></linearGradient><linearGradient id="fold" x1="0" y1="0" x2="1" y2="1"><stop offset="0" stop-color="#fffdf2"/><stop offset="1" stop-color="#efd77a"/></linearGradient><linearGradient id="grn" x1="0" y1="0" x2="1" y2="1"><stop offset="0" stop-color="#d8f5a8"/><stop offset="1" stop-color="#4aa818"/></linearGradient><linearGradient id="gry" x1="0" y1="0" x2="1" y2="1"><stop offset="0" stop-color="#ffffff"/><stop offset="1" stop-color="#d0d0d0"/></linearGradient></defs></svg>
<svg class="a" style="left:9px;top:28px;" width="22" height="21" viewBox="0 0 22 21"><path d="M7.3,0.7 H14 V7 H20.3 V13 H14 V19.4 H7.3 V13 H1 V7 H7.3 Z" fill="url(#yel)" stroke="#a98a4e" stroke-width="1.2" stroke-linejoin="round"/></svg>
<svg class="a" style="left:41px;top:29px;" width="25" height="18" viewBox="0 0 25 18"><path d="M1.5,1.2 H8.5 L10.5,3.2 H22.8 V16.6 H3.5 Z" fill="url(#fold)" stroke="#b39068" stroke-width="1.1" stroke-linejoin="round"/><path d="M10.5,3.2 V5.2 H22.8" fill="none" stroke="#c8a878" stroke-width="0.8"/></svg>
<svg class="a" style="left:76.5px;top:28px;" width="22" height="21" viewBox="0 0 22 21"><defs><linearGradient id="flp" x1="0" y1="0" x2="1" y2="1"><stop offset="0" stop-color="#8a8a8a"/><stop offset="1" stop-color="#3e3e3e"/></linearGradient></defs><path d="M0.8,0.5 H20.6 V19.6 H2.6 L0.8,17.8 Z" fill="url(#flp)" stroke="#4a4a4a" stroke-width="0.6"/><rect x="4" y="1.5" width="13.8" height="7.6" fill="#f7f7f7"/><rect x="5.2" y="3.6" width="10" height="0.9" fill="#9a9a9a"/><rect x="5.2" y="5.6" width="5.5" height="0.8" fill="#b0b0b0"/><rect x="4.2" y="11.4" width="11.9" height="7" fill="#ececec"/><rect x="6.4" y="12.6" width="1.9" height="6" fill="#333"/></svg>
<svg class="a" style="left:523px;top:28.5px;" width="20" height="20" viewBox="0 0 20 20"><defs><linearGradient id="trb" x1="0" y1="0" x2="1" y2="0"><stop offset="0" stop-color="#d9d9d9"/><stop offset="0.35" stop-color="#f6f6f6"/><stop offset="1" stop-color="#9c9c9c"/></linearGradient></defs><path d="M1,5.6 Q2,1.2 10,0.8 Q18,1.2 19,5.6 Z" fill="#c4c4c4" stroke="#6f6f6f" stroke-width="1.1"/><path d="M2.6,5.8 H17.4 L16.4,18.6 H3.6 Z" fill="url(#trb)" stroke="#707070" stroke-width="1.2"/><path d="M6.6,7.5 V17 M10,7.5 V17 M13.4,7.5 V17" stroke="#8e8e8e" stroke-width="1.3"/></svg>
<svg class="a" style="left:569px;top:35px;" width="14" height="14" viewBox="0 0 14 14"><polygon points="1,0.7 1,13.3 12.2,7" fill="url(#grn)" stroke="#5a9a28" stroke-width="0.8"/></svg>
<svg class="a" style="left:569.5px;top:63.8px;" width="10" height="10" viewBox="0 0 10 10"><rect x="0.6" y="0.6" width="8.6" height="8.6" fill="#c4c4c4" stroke="#7a7a7a" stroke-width="1"/></svg>
<svg class="a" style="left:673.5px;top:28px;" width="20" height="20" viewBox="0 0 20 20"><rect x="0.8" y="0.8" width="18.4" height="18.4" fill="#fbfbfb" stroke="#8d8d8d" stroke-width="1.2"/><path d="M7,1 V19 M13,1 V19 M1,7 H19 M1,13 H19" stroke="#dedede" stroke-width="0.9"/><polyline points="1.5,18 7,9.5 12.5,9.5 18.5,1.5" fill="none" stroke="#3b8fde" stroke-width="1.3"/><circle cx="12.2" cy="9.5" r="1.2" fill="#2f86da"/></svg>
<svg class="a" style="left:706px;top:25px;" width="26" height="26" viewBox="0 0 26 26"><polygon points="12.7,3 22,8 22,17.7 12.7,23 3.2,17.7 3.2,8" fill="#f0f1f3" stroke="#858585" stroke-width="1.3"/><path d="M10.9,8.3 L12.4,6.2 Q16,7.6 19.8,11.5" fill="none" stroke="#ea6f4a" stroke-width="1.5"/><path d="M12.1,10.3 Q16.5,11.5 19,15.3" fill="none" stroke="#7d8ea0" stroke-width="1.2"/><path d="M7.8,10.9 Q14.5,12 17.3,17.3" fill="none" stroke="#f2c32c" stroke-width="1.6"/><path d="M5.6,13.7 Q11.5,14.5 13.3,20.6" fill="none" stroke="#3a93e0" stroke-width="1.6"/></svg>
<svg class="a" style="left:761px;top:28px;" width="22" height="20" viewBox="0 0 22 20"><rect x="0.8" y="0.8" width="20.2" height="18.4" fill="url(#gry)" stroke="#8d8d8d" stroke-width="1.2"/><circle cx="7.2" cy="7.2" r="4.8" fill="#f5f5f5" stroke="#8a8a8a" stroke-width="1.2"/><path d="M4.5,7.2 H10" stroke="#999" stroke-width="0.8"/><rect x="12" y="11" width="8" height="7.5" fill="#f0f0f0" stroke="#9a9a9a" stroke-width="0.8"/><path d="M13,18 Q16,10 19,18" fill="none" stroke="#3b8fde" stroke-width="1.3"/></svg>
<svg class="a" style="left:971px;top:28.3px;" width="23" height="20" viewBox="0 0 23 20"><rect x="0.8" y="0.8" width="21" height="18.2" rx="1" fill="url(#gry)" stroke="#888" stroke-width="1.1"/><rect x="0.8" y="0.8" width="21" height="2.6" fill="#4f88c8"/><path d="M11.3,3.4 V19 M0.8,9.6 H21.8" stroke="#9a9a9a" stroke-width="1.2"/></svg>
<svg class="a" style="left:1017px;top:28.5px;" width="24" height="19" viewBox="0 0 24 19"><path d="M1.8,8.6 L5,5.8 L9.3,10.2 L18.8,1.2 L22.8,4.8 L9.3,17.8 Z" fill="url(#grn)" stroke="#4f8d2e" stroke-width="1" stroke-linejoin="round"/></svg>
<svg class="a" style="left:1184px;top:87px;" width="12" height="11" viewBox="0 0 12 11"><rect x="1" y="0.5" width="10" height="1.2" fill="#8a8a8a"/><polygon points="1,9.8 11,9.8 6,3.5" fill="#9a9a9a"/></svg>
<svg class="a" style="left:0;top:0" width="1200" height="20" viewBox="0 0 1200 20"><rect x="997.5" y="2" width="12" height="13" fill="#7f94aa" opacity="0.7"/><rect x="999.5" y="2.5" width="8" height="4.5" fill="#b9c8d6"/><rect x="999.5" y="9.5" width="8" height="5" fill="#b0c0d0"/><path d="M1021,2 L1027,12 M1027,2 L1021,12" stroke="#7f94aa" stroke-width="1"/><circle cx="1021" cy="13.5" r="2" fill="none" stroke="#7f94aa"/><circle cx="1027" cy="13.5" r="2" fill="none" stroke="#7f94aa"/><rect x="1041" y="2" width="7" height="9" fill="#a9bbcd" stroke="#7f94aa"/><rect x="1046" y="6" width="7" height="9" fill="#b5c5d5" stroke="#7f94aa"/><rect x="1063" y="3" width="9" height="11" fill="#a9bbcd" stroke="#7f94aa"/><rect x="1067" y="7" width="7" height="8" fill="#b5c5d5" stroke="#7f94aa"/><path d="M1084,6 H1091 Q1095,6 1095,10 Q1095,14 1090,14" fill="none" stroke="#7f94aa" stroke-width="1.8"/><polygon points="1082,6 1086,2.5 1086,9.5" fill="#7f94aa"/><path d="M1115,6 H1108 Q1104,6 1104,10 Q1104,14 1109,14" fill="none" stroke="#7f94aa" stroke-width="1.8"/><polygon points="1117,6 1113,2.5 1113,9.5" fill="#7f94aa"/><rect x="1124.5" y="1.5" width="10" height="12" fill="#e8e8e8" stroke="#777"/><rect x="1127.5" y="4.5" width="11" height="9" fill="#fff" stroke="#555"/><rect x="1127.5" y="4.5" width="11" height="2.5" fill="#3f6f9f"/><circle cx="1152.8" cy="8" r="6.6" fill="#f2f2f2" stroke="#3a4a5a" stroke-width="1.2"/><text x="1149.3" y="12" font-family="Liberation Sans" font-weight="bold" font-size="10" fill="#26384a">?</text><circle cx="1173.3" cy="8" r="5.2" fill="none" stroke="#7e7e7e" stroke-width="1"/><polygon points="1170.5,6.3 1176.1,6.3 1173.3,10.2" fill="#777"/><circle cx="1192.8" cy="8" r="5.2" fill="none" stroke="#e8eef4" stroke-width="1.2"/><polygon points="1189.8,6.1 1195.8,6.1 1192.8,10.5" fill="#fff"/></svg>
<svg class="a" style="left:1188px;top:633px;" width="12" height="12" viewBox="0 0 12 12"><rect x="1" y="11" width="1" height="1" fill="#b8b8b8"/><rect x="3" y="9" width="1" height="1" fill="#b8b8b8"/><rect x="3" y="11" width="1" height="1" fill="#b8b8b8"/><rect x="5" y="7" width="1" height="1" fill="#b8b8b8"/><rect x="5" y="9" width="1" height="1" fill="#b8b8b8"/><rect x="5" y="11" width="1" height="1" fill="#b8b8b8"/><rect x="7" y="5" width="1" height="1" fill="#b8b8b8"/><rect x="7" y="7" width="1" height="1" fill="#b8b8b8"/><rect x="7" y="9" width="1" height="1" fill="#b8b8b8"/><rect x="7" y="11" width="1" height="1" fill="#b8b8b8"/><rect x="9" y="3" width="1" height="1" fill="#b8b8b8"/><rect x="9" y="5" width="1" height="1" fill="#b8b8b8"/><rect x="9" y="7" width="1" height="1" fill="#b8b8b8"/><rect x="9" y="9" width="1" height="1" fill="#b8b8b8"/><rect x="9" y="11" width="1" height="1" fill="#b8b8b8"/><rect x="11" y="1" width="1" height="1" fill="#b8b8b8"/><rect x="11" y="3" width="1" height="1" fill="#b8b8b8"/><rect x="11" y="5" width="1" height="1" fill="#b8b8b8"/><rect x="11" y="7" width="1" height="1" fill="#b8b8b8"/><rect x="11" y="9" width="1" height="1" fill="#b8b8b8"/><rect x="11" y="11" width="1" height="1" fill="#b8b8b8"/></svg>
</body></html>
